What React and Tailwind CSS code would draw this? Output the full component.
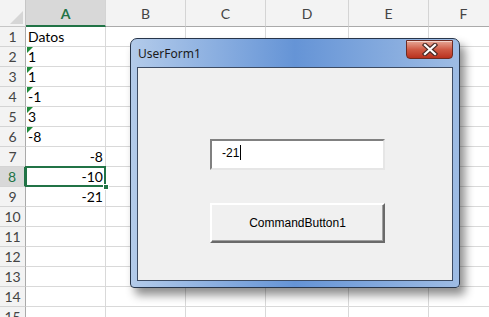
import React from 'react';

// Column widths (px) including right gridline
const columns = [
  { name: 'A', w: 80 },
  { name: 'B', w: 80 },
  { name: 'C', w: 80 },
  { name: 'D', w: 83 },
  { name: 'E', w: 80 },
  { name: 'F', w: 70 },
];

// Values in column A; text = stored as text (green flag, left aligned)
const cellsA = [
  { v: 'Datos', text: false, left: true },
  { v: '1', text: true },
  { v: '1', text: true },
  { v: '-1', text: true },
  { v: '3', text: true },
  { v: '-8', text: true },
  { v: '-8' },
  { v: '-10' },
  { v: '-21' },
];

const rows = Array.from({ length: 15 }, (_, i) => i + 1);

function HeaderRow() {
  return (
    <div className="flex h-[27px] bg-[#f3f3f3]">
      <div className="relative w-[26px] shrink-0 border-r border-b border-[#c6c6c6]">
        <div className="absolute right-[2px] bottom-[2px] w-0 h-0 border-l-[13px] border-l-transparent border-b-[13px] border-b-[#d6d6d6]" />
      </div>
      {columns.map((c) => (
        <div
          key={c.name}
          style={{ width: c.w }}
          className={`shrink-0 flex items-center justify-center border-r border-[#d4d4d4] ${
            c.name === 'A'
              ? 'bg-[#d8d8d8] text-[#217346] font-bold border-b-2 border-b-[#217346] pt-[2px]'
              : 'text-[#444] border-b border-b-[#aaaaaa] pt-[1px]'
          }`}
        >
          {c.name}
        </div>
      ))}
    </div>
  );
}

function Row({ n }) {
  const cell = cellsA[n - 1];
  const selected = n === 8;
  return (
    <div className="flex h-[20px]">
      <div
        className={`w-[26px] shrink-0 flex items-center justify-center border-b border-[#d4d4d4] ${
          selected
            ? 'bg-[#d8d8d8] text-[#217346] border-r-2 border-r-[#217346]'
            : 'bg-[#f3f3f3] text-[#444] border-r border-r-[#aaaaaa]'
        }`}
      >
        {n}
      </div>
      {columns.map((c, i) => (
        <div
          key={c.name}
          style={{ width: c.w }}
          className={`relative shrink-0 border-r border-b border-[#d9d9d9] flex items-center text-black ${
            i === 0 && selected ? 'z-10' : ''
          }`}
        >
          {i === 0 && cell && (
            <>
              {cell.text && (
                <div className="absolute left-[1px] top-0 w-0 h-0 border-t-[6px] border-t-[#1f8a3a] border-r-[6px] border-r-transparent" />
              )}
              <span className={`w-full px-[2px] ${cell.text || cell.left ? 'text-left' : 'text-right'}`}>
                {cell.v}
              </span>
            </>
          )}
          {i === 0 && selected && (
            <>
              <div className="absolute -left-[1px] -top-[1px] -right-[1px] -bottom-[1px] border-2 border-[#217346]" />
              <div className="absolute -right-[4px] -bottom-[4px] w-[6px] h-[6px] bg-[#217346] border border-white" />
            </>
          )}
        </div>
      ))}
    </div>
  );
}

function CloseButton() {
  return (
    <div className="absolute right-[6px] top-[1px] w-[47px] h-[19px] rounded-b-[4px] border border-[#6e2b22] bg-gradient-to-b from-[#e6a797] via-[#cf5a45] to-[#b9301d] flex items-center justify-center shadow-[inset_0_1px_0_rgba(255,255,255,0.5)]">
      <svg width="16" height="13" viewBox="0 0 16 13">
        <path
          d="M3 2 L13 11 M13 2 L3 11"
          stroke="#4a2a26"
          strokeWidth="4.5"
          strokeLinecap="square"
        />
        <path
          d="M3 2 L13 11 M13 2 L3 11"
          stroke="#ffffff"
          strokeWidth="2.2"
          strokeLinecap="square"
        />
      </svg>
    </div>
  );
}

function UserForm() {
  return (
    <div className="absolute z-20 left-[130px] top-[38px] w-[330px] h-[250px] rounded-t-[7px] rounded-b-[4px] border border-[#27354a] bg-gradient-to-r from-[#b3cbea] via-[#6594d6] to-[#9ebce4] shadow-[5px_7px_10px_rgba(0,0,0,0.45)] flex flex-col px-[6px] pb-[6px]">
      <CloseButton />
      <div className="h-[28px] shrink-0 flex items-center pl-[1px] pt-[2px] text-[12px] text-[#1b1b1b] font-['Noto_Sans',sans-serif]">
        UserForm1
      </div>
      <div className="flex-1 border border-[#3c4b63] bg-[#f0f0f0] flex flex-col items-center pt-[71px] font-['Liberation_Sans',Arial,sans-serif] text-[12px] text-black">
        <div className="ml-[5px] w-[175px] h-[31px] bg-white border-2 border-t-[#808080] border-l-[#808080] border-b-[#e6e6e6] border-r-[#e6e6e6] flex items-center pl-[10px] pb-[4px]">
          <span>-21</span>
          <span className="ml-[1px] w-[1px] h-[15px] bg-black" />
        </div>
        <div className="ml-[5px] mt-[33px] w-[175px] h-[40px] bg-[#f0f0f0] border-2 border-t-[#ffffff] border-l-[#ffffff] border-b-[#6a6a6a] border-r-[#6a6a6a] shadow-[inset_-1px_-1px_0_#a0a0a0] flex items-center justify-center">
          CommandButton1
        </div>
      </div>
    </div>
  );
}

export default function App() {
  return (
    <div className="relative w-[489px] h-[317px] overflow-hidden bg-white font-['Lato','Liberation_Sans',sans-serif] text-[14px]">
      <HeaderRow />
      {rows.map((n) => (
        <Row key={n} n={n} />
      ))}
      <UserForm />
    </div>
  );
}
